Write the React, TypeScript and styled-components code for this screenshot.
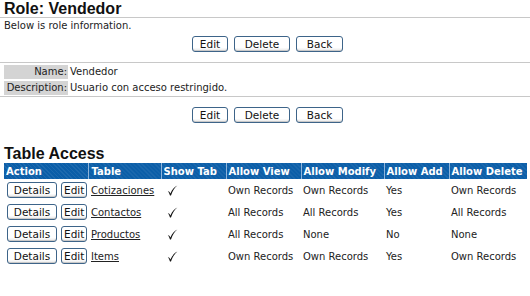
import React from "react";
import styled, { createGlobalStyle } from "styled-components";

const GlobalStyle = createGlobalStyle`
  html, body {
    margin: 0;
    padding: 0;
    background: #ffffff;
  }
  body {
    font-family: "DejaVu Sans", Verdana, sans-serif;
    font-size: 10px;
    color: #222;
  }
`;

const Page = styled.div`
  width: 530px;
  padding: 0 0 0 4px;
  box-sizing: border-box;
`;

const Title = styled.h1`
  margin: 0;
  font-family: "Liberation Sans", Arial, sans-serif;
  font-size: 16px;
  font-weight: bold;
  line-height: 17px;
  color: #111;
`;

const Rule = styled.div`
  height: 1px;
  background: #c8c8c8;
  margin-left: -4px;
`;

const Intro = styled.div`
  line-height: 14px;
  margin-top: 1px;
`;

const ButtonBar = styled.div<{ $top: number; $bottom: number }>`
  display: flex;
  justify-content: center;
  gap: 6px;
  margin: ${(p) => `${p.$top}px 0 ${p.$bottom}px`};
  padding-left: 1px;
`;

const Button = styled.button<{ $w?: number }>`
  font-family: "DejaVu Sans", Verdana, sans-serif;
  font-size: 10.5px;
  color: #111;
  height: 16px;
  width: ${(p) => (p.$w ? `${p.$w}px` : "auto")};
  padding: 0 2px;
  line-height: 13px;
  background: linear-gradient(#ffffff 0%, #ffffff 75%, #e6e6e6 100%);
  border: 1px solid #3d6489;
  border-radius: 3px;
  box-shadow: inset 0 -1px 0 #c9c9c9;
  cursor: pointer;
`;

const InfoTable = styled.div`
  display: grid;
  grid-template-columns: 64px 1fr;
  row-gap: 2px;
  margin: 2px 0 1px;
`;

const Label = styled.div`
  background: #d4d4d4;
  text-align: right;
  padding-right: 1px;
  line-height: 14px;
`;

const Value = styled.div`
  padding-left: 2px;
  line-height: 14px;
`;

const AccessTable = styled.table`
  border-collapse: collapse;
  width: 523px;
  table-layout: fixed;
  margin-top: 1px;
`;

const Th = styled.th<{ $w: number; $pad?: number }>`
  box-sizing: border-box;
  width: ${(p) => p.$w}px;
  background-color: #0b5ea8;
  background-image: repeating-linear-gradient(
    45deg,
    rgba(255, 255, 255, 0.07) 0 1px,
    transparent 1px 3px
  );
  color: #fff;
  font-weight: bold;
  text-align: left;
  height: 16px;
  padding: 0 0 0 ${(p) => p.$pad ?? 2}px;
  line-height: 15px;
  border-left: 1px solid #8fb4da;
  white-space: nowrap;
  overflow: hidden;
  &:first-child {
    border-left: none;
  }
`;

const Td = styled.td<{ $pad?: number }>`
  height: 22px;
  padding: 0 0 0 ${(p) => p.$pad ?? 2}px;
  white-space: nowrap;
  vertical-align: middle;
`;

const ActionCell = styled.div`
  display: flex;
  gap: 4px;
  padding-left: 1px;
`;

const TableLink = styled.a`
  color: #222;
  text-decoration: underline;
`;

const CheckIcon = styled.svg`
  display: block;
  margin-left: 4px;
`;

function Check() {
  return (
    <CheckIcon width="11" height="11" viewBox="0 0 11 11">
      <path
        d="M0.8 6.2 C1.8 6.0 2.6 6.8 3.4 8.4 C5.0 4.8 7.4 2.0 10.4 0.6 C7.6 2.8 5.6 6.0 4.0 10.4 L3.0 10.4 C2.4 8.6 1.8 7.2 0.8 6.2 Z"
        fill="#111"
      />
    </CheckIcon>
  );
}

const rows = [
  { table: "Cotizaciones", view: "Own Records", modify: "Own Records", add: "Yes", del: "Own Records" },
  { table: "Contactos", view: "All Records", modify: "All Records", add: "Yes", del: "All Records" },
  { table: "Productos", view: "All Records", modify: "None", add: "No", del: "None" },
  { table: "Items", view: "Own Records", modify: "Own Records", add: "Yes", del: "Own Records" },
];

function Actions({ top, bottom }: { top: number; bottom: number }) {
  return (
    <ButtonBar $top={top} $bottom={bottom}>
      <Button $w={36}>Edit</Button>
      <Button $w={56}>Delete</Button>
      <Button $w={47}>Back</Button>
    </ButtonBar>
  );
}

export default function App() {
  return (
    <>
      <GlobalStyle />
      <Page>
        <Title>Role: Vendedor</Title>
        <Rule />
        <Intro>Below is role information.</Intro>
        <Actions top={3} bottom={10} />
        <Rule />
        <InfoTable>
          <Label>Name:</Label>
          <Value>Vendedor</Value>
          <Label>Description:</Label>
          <Value>Usuario con acceso restringido.</Value>
        </InfoTable>
        <Rule />
        <Actions top={10} bottom={22} />
        <Title>Table Access</Title>
        <AccessTable>
          <thead>
            <tr>
              <Th $w={84}>Action</Th>
              <Th $w={73} $pad={3}>Table</Th>
              <Th $w={65}>Show Tab</Th>
              <Th $w={75}>Allow View</Th>
              <Th $w={83}>Allow Modify</Th>
              <Th $w={65}>Allow Add</Th>
              <Th $w={78}>Allow Delete</Th>
            </tr>
          </thead>
          <tbody>
            {rows.map((r) => (
              <tr key={r.table}>
                <Td>
                  <ActionCell>
                    <Button $w={50}>Details</Button>
                    <Button $w={26}>Edit</Button>
                  </ActionCell>
                </Td>
                <Td $pad={3}>
                  <TableLink href="#">{r.table}</TableLink>
                </Td>
                <Td>
                  <Check />
                </Td>
                <Td>{r.view}</Td>
                <Td>{r.modify}</Td>
                <Td>{r.add}</Td>
                <Td>{r.del}</Td>
              </tr>
            ))}
          </tbody>
        </AccessTable>
      </Page>
    </>
  );
}
